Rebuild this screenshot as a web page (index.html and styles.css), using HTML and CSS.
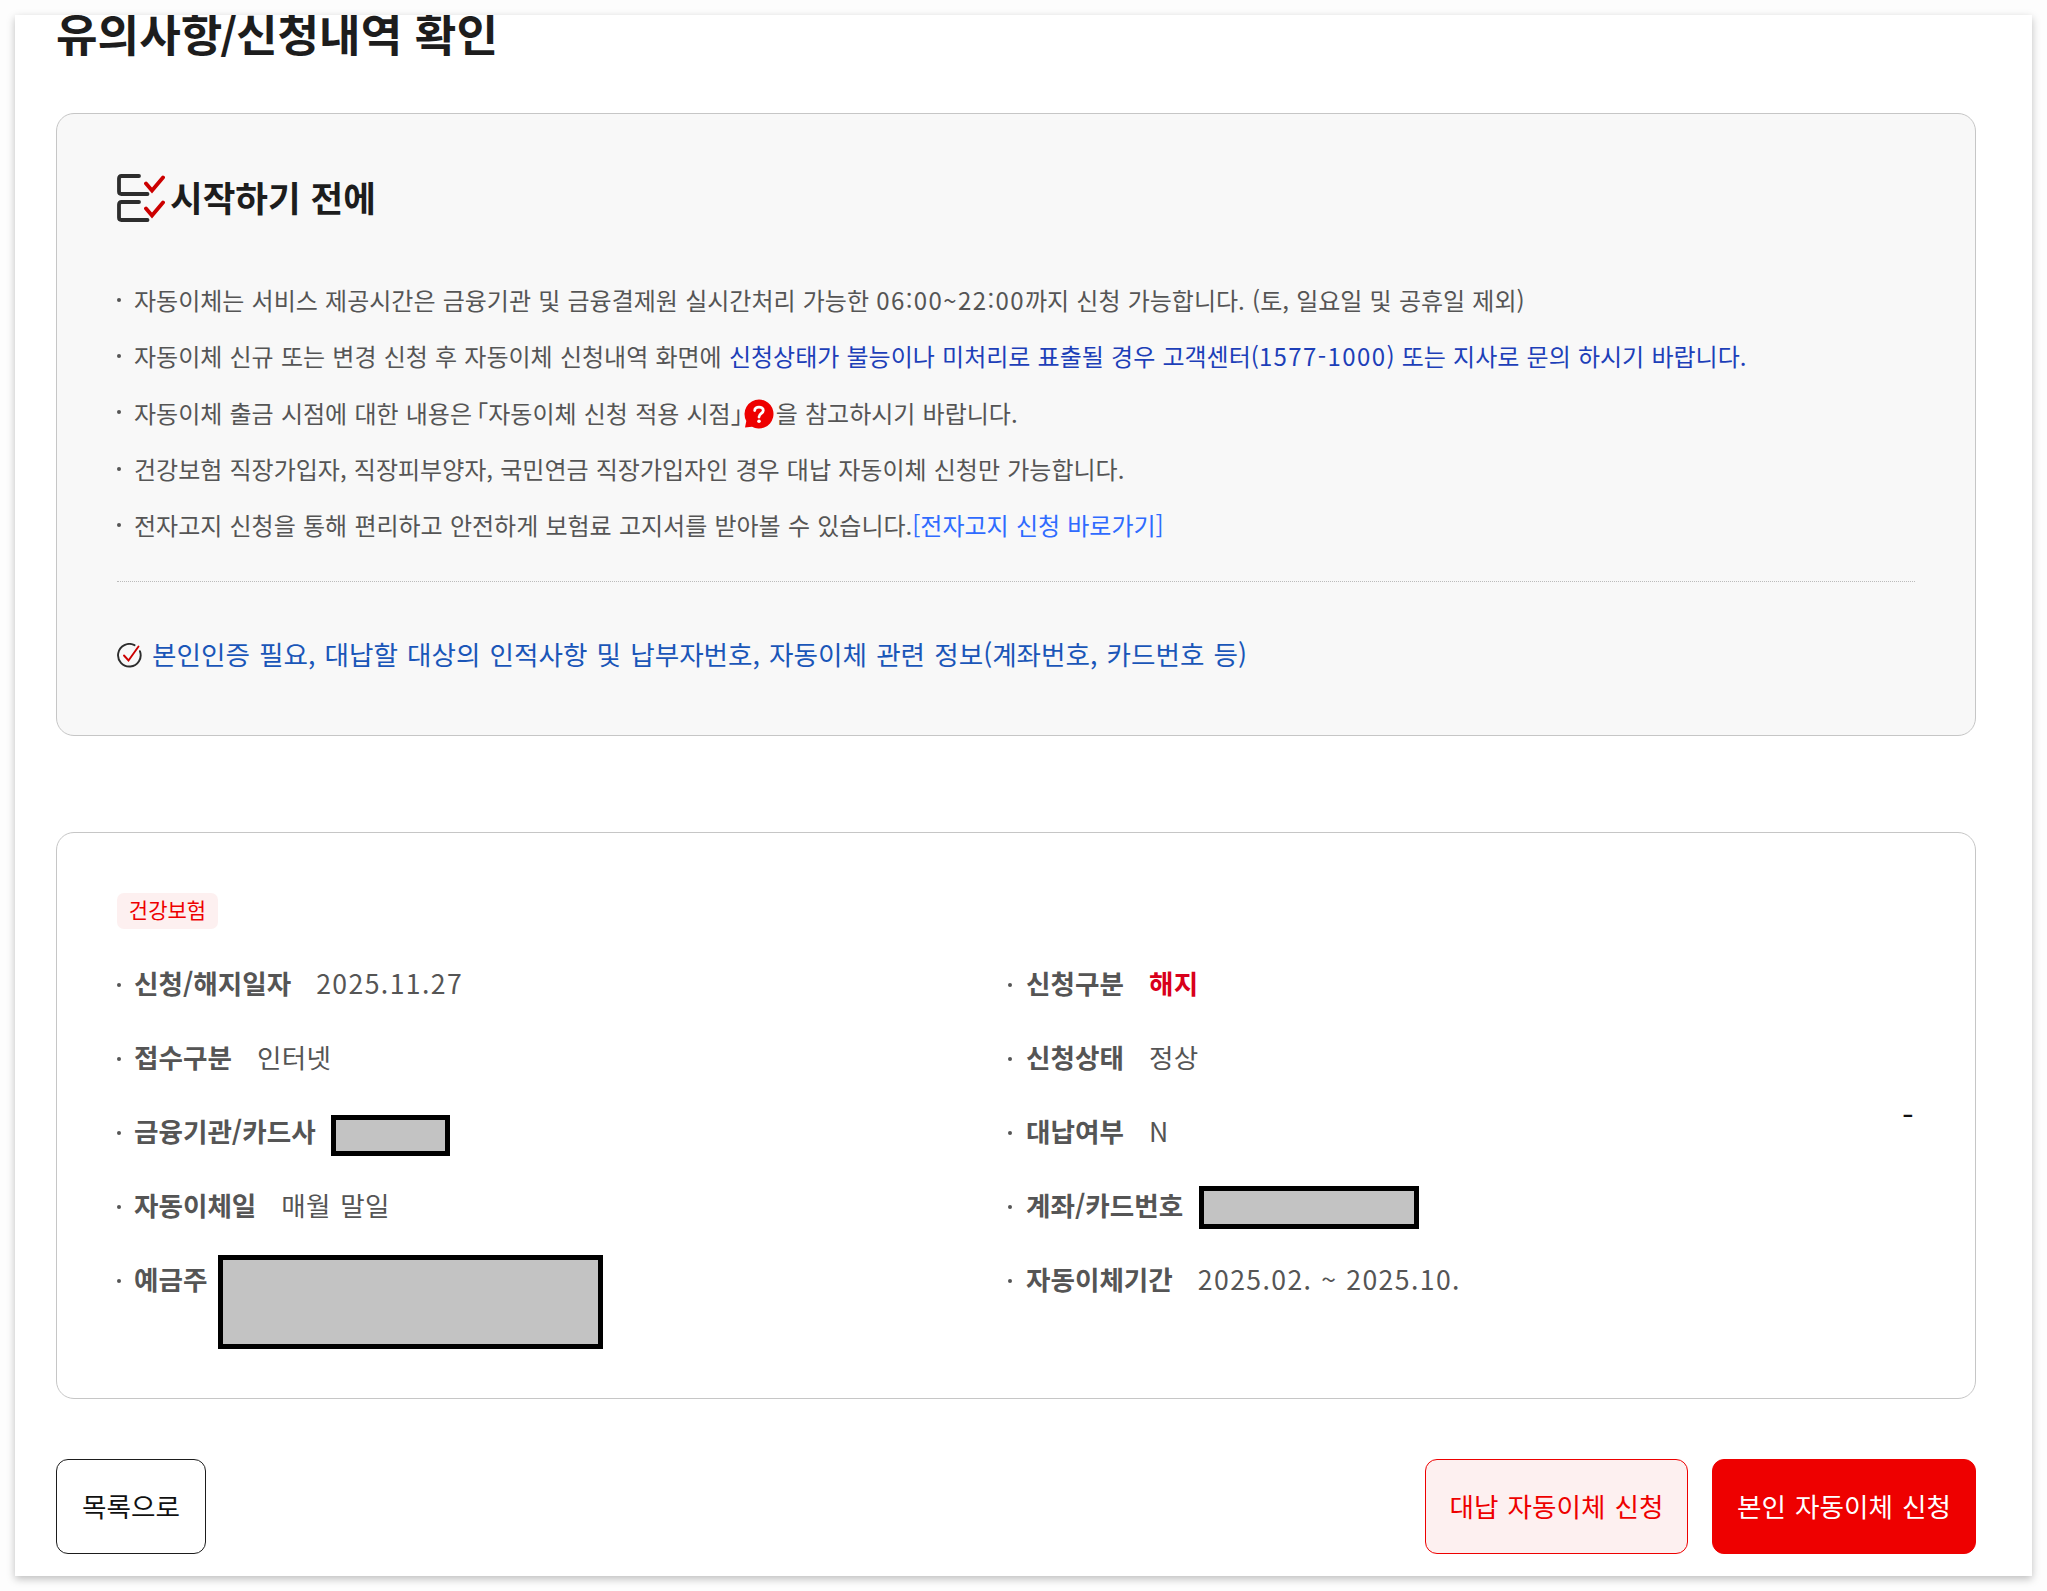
FILE: index.html
```
<!DOCTYPE html>
<html lang="ko">
<head>
	<meta charset="utf-8">
	<title>유의사항/신청내역 확인</title>
	<link rel="stylesheet" href="styles.css">
</head>
<body>
	<div class="page">
		<h1 class="title">유의사항<span class="slash">/</span>신청내역 확인</h1>

		<div class="box guide">
			<h2 class="guide-title">
				<svg class="ico-list" width="48" height="48" viewBox="0 0 48 48" fill="none" stroke-width="3.8" stroke-linecap="round" stroke-linejoin="round">
					<path stroke="#2d2d2d" d="M22 2H4.500Q2 2 2 4.500V17.500Q2 20 4.500 20H30.500M22 28H4.500Q2 28 2 30.500V43.500Q2 46 4.500 46H30.500"/>
					<path stroke="#c00" stroke-linejoin="miter" d="M29 9.500L35 16.500L46 3.500M29 34.500L35 41.500L46 28.500"/>
				</svg>
				<span>시작하기 전에</span>
			</h2>
			<ul class="guide-list">
				<li>자동이체는 서비스 제공시간은 금융기관 및 금융결제원 실시간처리 가능한 <span class="num">06:00~22:00</span>까지 신청 가능합니다. (토, 일요일 및 공휴일 제외)</li>
				<li>자동이체 신규 또는 변경 신청 후 자동이체 신청내역 화면에 <span class="blue">신청상태가 불능이나 미처리로 표출될 경우 고객센터(<span class="num">1577-1000</span>) 또는 지사로 문의 하시기 바랍니다.</span></li>
				<li class="tall">자동이체 출금 시점에 대한 내용은 <span class="quote">「</span>자동이체 신청 적용 시점<span class="quote-end">」</span><svg class="ico-help" width="30" height="30" viewBox="0 0 30 30">
					<path fill="#e00" d="M15 .5A14.500 14.500 0 1 1 8 27.700L1 28.500L2.300 22A14.500 14.500 0 0 1 15 .5Z"/>
					<path fill="none" stroke="#fff" stroke-width="2.800" stroke-linecap="round" d="M10.700 11.500C10.700 6.900 19.300 6.900 19.300 11.500C19.300 14.500 15 14.300 15 18"/>
					<circle cx="15" cy="22.300" r="1.800" fill="#fff"/>
				</svg>을 참고하시기 바랍니다.</li>
				<li>건강보험 직장가입자, 직장피부양자, 국민연금 직장가입자인 경우 대납 자동이체 신청만 가능합니다.</li>
				<li>전자고지 신청을 통해 편리하고 안전하게 보험료 고지서를 받아볼 수 있습니다.<a class="link" href="#">[전자고지 신청 바로가기]</a></li>
			</ul>
			<p class="guide-need">
				<svg class="ico-check" width="25" height="25" viewBox="0 0 25 25" fill="none" stroke-width="1.900" stroke-linecap="round">
					<path stroke="#2d2d2d" d="M17.500 2.200A11.300 11.300 0 1 0 22.900 8.200"/>
					<path stroke="#c00" d="M7 12.500L11.500 17.500L21.500 3.500"/>
				</svg>
				<span>본인인증 필요, 대납할 대상의 인적사항 및 납부자번호, 자동이체 관련 정보(계좌번호, 카드번호 등)</span>
			</p>
		</div>

		<div class="box detail">
			<span class="badge">건강보험</span>
			<div class="cols">
				<ul class="col">
					<li><b>신청/해지일자</b><span class="num">2025.11.27</span></li>
					<li><b>접수구분</b><span>인터넷</span></li>
					<li><b>금융기관/카드사</b><i class="mask mask-bank"></i></li>
					<li><b>자동이체일</b><span>매월 말일</span></li>
					<li><b>예금주</b><i class="mask mask-owner"></i></li>
				</ul>
				<ul class="col col-right">
					<li><b>신청구분</b><strong class="red">해지</strong></li>
					<li><b>신청상태</b><span>정상</span></li>
					<li><b>대납여부</b><span>N</span></li>
					<li><b>계좌/카드번호</b><i class="mask mask-account"></i></li>
					<li><b>자동이체기간</b><span class="num">2025.02. ~ 2025.10.</span></li>
				</ul>
			</div>
			<span class="dash">-</span>
		</div>

		<div class="buttons">
			<button class="btn">목록으로</button>
			<button class="btn btn-line">대납 자동이체 신청</button>
			<button class="btn btn-red">본인 자동이체 신청</button>
		</div>
	</div>
</body>
</html>
```
FILE: styles.css
```
* {
	box-sizing: border-box;
}
body {
	margin: 0;
	padding: 15px;
	background-color: #fdfdfd;
	font-family: "Noto Sans CJK KR", sans-serif;
	font-size: 26.6px;
	color: #555;
}
h1, h2, p, ul {
	margin: 0;
	padding: 0;
}
ul {
	list-style: none;
}
.page {
	width: 2017px;
	height: 1561px;
	padding: 0 56px 0 41px;
	background-color: #fff;
	box-shadow: 0 3px 8px rgba(0, 0, 0, 0.25);
	overflow: hidden;
}
.title {
	height: 98px;
	margin-top: -14px;
	margin-bottom: 14px;
	font-size: 45.2px;
	line-height: 64px;
	color: #1d1d1d;
}
.slash {
	margin: 0 -2px;
}
.box {
	position: relative;
	width: 1920px;
	padding: 60px;
	border: 1px solid #c6c6c6;
	border-radius: 18px;
}
.guide {
	height: 623px;
	background-color: #f8f8f8;
}
.guide-title {
	display: flex;
	gap: 5px;
	height: 48px;
	margin-bottom: 51px;
	font-size: 35.5px;
	line-height: 45px;
	color: #1d1d1d;
}
.guide-list {
	height: 309px;
	border-bottom: 1px dotted #bbb;
	font-size: 24px;
	word-spacing: 0.5px;
}
.guide-list li {
	position: relative;
	height: 56px;
	padding-left: 17px;
	line-height: 54px;
	white-space: nowrap;
}
.guide-list li.tall {
	height: 57px;
	line-height: 55px;
}
.guide-list li:before, .col li:before {
	content: "";
	position: absolute;
	left: 0;
	top: 25px;
	width: 4px;
	height: 4px;
	border-radius: 50%;
	background-color: #555;
}
.guide-list .num {
	letter-spacing: 1.4px;
}
.quote, .quote-end {
	font-feature-settings: "halt";
}
.quote {
	margin-left: -3px;
}
.ico-help {
	margin: 0 2px 0 1px;
	vertical-align: -6px;
}
.blue {
	color: #1d3fb8;
}
.link {
	color: #2f6bff;
	text-decoration: none;
}
.guide-need {
	display: flex;
	align-items: center;
	gap: 10px;
	height: 40px;
	margin-top: 53px;
	line-height: 38px;
	color: #1a56b8;
	word-spacing: 1.7px;
	white-space: nowrap;
}
.guide-need span {
	height: 40px;
}
.detail {
	height: 567px;
	margin-top: 96px;
}
.badge {
	display: block;
	width: 101px;
	height: 36px;
	border-radius: 7px;
	background-color: #fdf0f0;
	font-size: 21px;
	line-height: 32px;
	text-align: center;
	color: #e00;
}
.cols {
	display: grid;
	grid-template-columns: 891px 1fr;
	margin-top: 18px;
}
.col li {
	position: relative;
	display: flex;
	height: 74px;
	padding-left: 17px;
	line-height: 72px;
	white-space: nowrap;
}
.col-right li {
	padding-left: 18px;
}
.col li:before {
	top: 36px;
}
.col span, .col strong {
	margin-left: 25px;
	letter-spacing: 0.3px;
	word-spacing: 1.7px;
}
.col .num {
	letter-spacing: 1.4px;
	word-spacing: 0;
}
.col .red {
	color: #d9001b;
}
.mask {
	flex: none;
	border: 5px solid #000;
	background-color: #c3c3c3;
}
.mask-bank {
	width: 119px;
	height: 41px;
	margin: 20px 0 0 15px;
}
.mask-account {
	width: 220px;
	height: 43px;
	margin: 17px 0 0 16px;
}
.mask-owner {
	width: 385px;
	height: 94px;
	margin: 12px 0 0 11px;
}
.dash {
	position: absolute;
	right: 61px;
	top: 261px;
	font-family: Inter, sans-serif;
	line-height: 40px;
	color: #111;
}
.buttons {
	display: flex;
	gap: 24px;
	width: 1920px;
	margin-top: 60px;
}
.btn {
	width: 150px;
	height: 95px;
	padding: 0 0 2px;
	border: 1px solid #1d1d1d;
	border-radius: 12px;
	background-color: #fff;
	font: inherit;
	color: #111;
	word-spacing: 1.6px;
}
.btn-line {
	width: 263px;
	margin-left: auto;
	border-color: #e00;
	background-color: #fdf0f0;
	color: #e00;
}
.btn-red {
	width: 264px;
	border-color: #e00;
	background-color: #e00;
	color: #fff;
}
```
